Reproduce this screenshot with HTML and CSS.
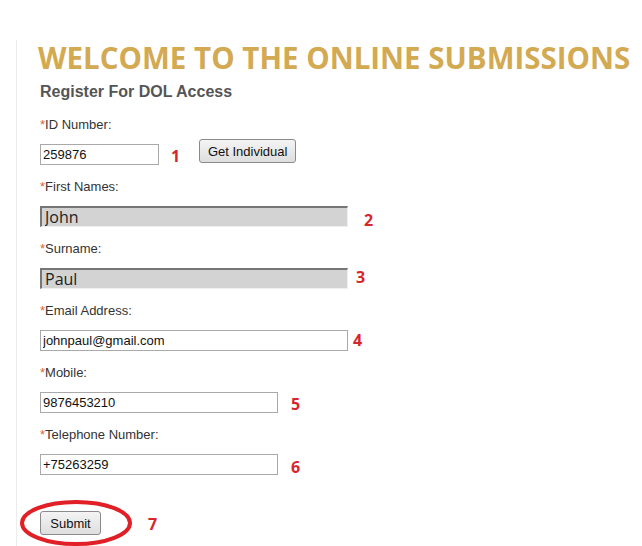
FILE: index.html
```html
<!DOCTYPE html>
<html>
<head>
<meta charset="utf-8">
<link rel="stylesheet" href="styles.css">
</head>
<body>
<div class="page">
  <h1 class="title"><span class="title-text">WELCOME TO THE ONLINE SUBMISSIONS</span></h1>
  <h2 class="subtitle">Register For DOL Access</h2>
  <form class="form">
    <div class="field">
      <label class="label"><span class="req">*</span>ID Number:</label>
      <div class="row row-id">
        <input class="input input-id" type="text" value="259876">
        <span class="num num-1">1</span>
        <button type="button" class="btn btn-get">Get Individual</button>
      </div>
    </div>
    <div class="field">
      <label class="label"><span class="req">*</span>First Names:</label>
      <div class="row">
        <input class="input input-ro" type="text" value="John" readonly>
        <span class="num num-2">2</span>
      </div>
    </div>
    <div class="field">
      <label class="label"><span class="req">*</span>Surname:</label>
      <div class="row">
        <input class="input input-ro" type="text" value="Paul" readonly>
        <span class="num num-3">3</span>
      </div>
    </div>
    <div class="field">
      <label class="label"><span class="req">*</span>Email Address:</label>
      <div class="row">
        <input class="input input-wide" type="text" value="johnpaul@gmail.com">
        <span class="num num-4">4</span>
      </div>
    </div>
    <div class="field">
      <label class="label"><span class="req">*</span>Mobile:</label>
      <div class="row">
        <input class="input input-mid" type="text" value="9876453210">
        <span class="num num-5">5</span>
      </div>
    </div>
    <div class="field">
      <label class="label"><span class="req">*</span>Telephone Number:</label>
      <div class="row">
        <input class="input input-mid" type="text" value="+75263259">
        <span class="num num-6">6</span>
      </div>
    </div>
    <div class="submit-row">
      <div class="submit-wrap">
        <button type="button" class="btn btn-submit">Submit</button>
        <svg class="ring" width="116" height="48" viewBox="0 0 116 48"><ellipse cx="58" cy="24" rx="54" ry="21" fill="none" stroke="#e01f26" stroke-width="4"/></svg>
      </div>
      <span class="num num-7">7</span>
    </div>
  </form>
</div>
</body>
</html>
```
FILE: styles.css
```css
html, body {
  margin: 0;
  padding: 0;
  background: #fff;
}
body {
  font-family: "Liberation Sans", Arial, sans-serif;
  color: #333;
  overflow: hidden;
}
.page {
  margin-top: 44px;
  margin-left: 16px;
  border-left: 1px solid #ececec;
  padding-left: 21px;
  min-height: 520px;
}
.title {
  margin: -4px 0 0 0;
  font-family: "Open Sans", sans-serif;
  font-weight: 700;
  font-size: 31px;
  line-height: 34px;
  color: #d3a951;
  white-space: nowrap;
}
.title-text {
  display: inline-block;
  transform: scaleX(0.952);
  transform-origin: left center;
}
.subtitle {
  margin: 9px 0 0 2px;
  font-size: 16px;
  line-height: 18px;
  font-weight: 700;
  color: #555;
}
.form {
  margin: 16px 0 0 2px;
  display: flex;
  flex-direction: column;
  gap: 14px;
}
.field {
  display: flex;
  flex-direction: column;
  gap: 11px;
}
.label {
  font-size: 13px;
  line-height: 16px;
  color: #333;
}
.req {
  color: #e0652e;
}
.row {
  display: flex;
  align-items: center;
  height: 21px;
}
.input {
  box-sizing: border-box;
  height: 21px;
  margin: 0;
  padding: 0 2px;
  border: 1px solid #a9a9a9;
  font-family: "Liberation Sans", Arial, sans-serif;
  font-size: 13px;
  color: #111;
  background: #fff;
  outline: none;
}
.input-id { width: 119px; }
.input-ro {
  width: 308px;
  background: #d3d3d3;
  border-top: 2px solid #767676;
  border-left: 2px solid #767676;
  border-right: 1px solid #efefef;
  border-bottom: 1px solid #efefef;
  font-family: "Open Sans", sans-serif;
  font-size: 16px;
  padding: 0 3px;
  color: #222;
}
.input-wide { width: 308px; }
.input-mid { width: 238px; }
.num {
  font-family: "Open Sans", sans-serif;
  font-weight: 700;
  font-size: 16px;
  color: #d7262b;
  line-height: 21px;
}
.num-1 { margin-left: 12px; margin-top: 2px; }
.num-2 { margin-left: 16px; margin-top: 8px; }
.num-3 { margin-left: 8px; margin-top: -2px; }
.num-4 { margin-left: 5px; margin-top: 0; }
.num-5 { margin-left: 13px; margin-top: 3px; }
.num-6 { margin-left: 13px; margin-top: 5px; }
.btn {
  box-sizing: border-box;
  margin: 0;
  font-family: "Liberation Sans", Arial, sans-serif;
  font-size: 13px;
  color: #111;
  background: linear-gradient(#f4f4f4, #dedede);
  border: 1px solid #8a8a8a;
  border-radius: 3px;
  height: 24px;
  padding: 0 6px;
}
.row-id {
  align-items: flex-start;
}
.row-id .num-1 {
  margin-top: 2px;
}
.btn-get {
  margin-left: 19px;
  margin-top: -5px;
  width: 97px;
}
.submit-row {
  display: flex;
  align-items: center;
  margin-top: 22px;
}
.submit-wrap {
  position: relative;
}
.btn-submit {
  width: 61px;
  display: block;
}
.ring {
  position: absolute;
  left: -22px;
  top: -12px;
}
.submit-row .num-7 {
  margin-left: 47px;
  margin-top: 2px;
}
```
